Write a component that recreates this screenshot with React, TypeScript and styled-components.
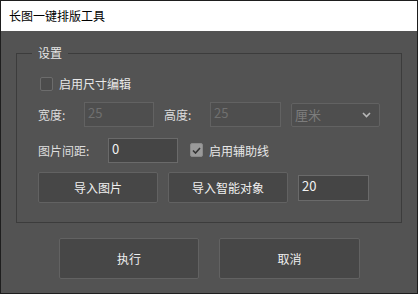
import styled, { createGlobalStyle } from "styled-components";

const GlobalStyle = createGlobalStyle`
  html, body {
    margin: 0;
    padding: 0;
    background: #535353;
  }
  * {
    box-sizing: border-box;
  }
  body {
    font-family: "Noto Sans CJK SC", "Noto Sans", sans-serif;
    font-size: 12px;
  }
`;

export default function App() {
  return (
    <>
      <GlobalStyle />
      <Window>
        <TitleBar>长图一键排版工具</TitleBar>
        <Body>
          <GroupBox>
            <Legend>设置</Legend>
            <CheckRow>
              <CheckBox />
              <CheckLabel>启用尺寸编辑</CheckLabel>
            </CheckRow>
            <Row $height={25} $top={12}>
              <Label $width={46}>宽度:</Label>
              <Field $width={70} $disabled>25</Field>
              <Label $width={46} $gap={10}>高度:</Label>
              <Field $width={71} $disabled>25</Field>
              <Select>
                <span>厘米</span>
                <svg width="9" height="6" viewBox="0 0 9 6">
                  <path d="M1 1 L4.5 4.5 L8 1" stroke="#b8b8b8" strokeWidth="1.6" fill="none" />
                </svg>
              </Select>
            </Row>
            <Row $height={26} $top={10}>
              <Label $width={70}>图片间距:</Label>
              <Field $width={70}>0</Field>
              <CheckBox $checked $gap={12}>
                <svg width="9" height="7" viewBox="0 0 9 7">
                  <path d="M1 3.5 L3.5 6 L8 1" stroke="#333" strokeWidth="1.6" fill="none" />
                </svg>
              </CheckBox>
              <CheckLabel>启用辅助线</CheckLabel>
            </Row>
            <Row $height={31} $top={9}>
              <Button $width={120} $height={31}>导入图片</Button>
              <Button $width={120} $height={31} $gap={10}>导入智能对象</Button>
              <Field $width={71} $height={26} $gap={10}>20</Field>
            </Row>
          </GroupBox>
          <Actions>
            <Button $width={140} $height={41}>执行</Button>
            <Button $width={141} $height={41}>取消</Button>
          </Actions>
        </Body>
      </Window>
    </>
  );
}

const Window = styled.div`
  width: 418px;
  height: 294px;
  border: 1px solid #1e1e1e;
  background: #535353;
  display: flex;
  flex-direction: column;
`;

const TitleBar = styled.div`
  height: 30px;
  background: #ffffff;
  color: #000000;
  display: flex;
  align-items: center;
  padding-left: 8px;
  padding-bottom: 2px;
  font-size: 12px;
`;

const Body = styled.div`
  flex: 1;
  display: flex;
  flex-direction: column;
  padding: 22px 15px 0;
`;

const GroupBox = styled.div`
  position: relative;
  height: 170px;
  border: 1px solid #3c3c3c;
  display: flex;
  flex-direction: column;
  padding: 23px 0 0 21px;
`;

const Legend = styled.span`
  position: absolute;
  top: -9px;
  left: 15px;
  padding: 0 6px;
  background: #535353;
  color: #e6e6e6;
  line-height: 16px;
`;

const CheckRow = styled.div`
  display: flex;
  align-items: center;
  height: 13px;
  padding-left: 2px;
`;

const CheckBox = styled.div<{ $checked?: boolean; $gap?: number }>`
  width: 13px;
  height: 14px;
  margin-left: ${(p) => p.$gap ?? 0}px;
  border: 1px solid ${(p) => (p.$checked ? "#8a8a8a" : "#6c6c6c")};
  border-radius: 2px;
  background: ${(p) => (p.$checked ? "#9a9a9a" : "#4c4c4c")};
  display: flex;
  align-items: center;
  justify-content: center;
  flex-shrink: 0;
`;

const CheckLabel = styled.span`
  margin-left: 6px;
  color: #e8e8e8;
`;

const Row = styled.div<{ $height: number; $top: number }>`
  display: flex;
  align-items: center;
  height: ${(p) => p.$height}px;
  margin-top: ${(p) => p.$top}px;
`;

const Label = styled.span<{ $width: number; $gap?: number }>`
  width: ${(p) => p.$width}px;
  margin-left: ${(p) => p.$gap ?? 0}px;
  color: #dedede;
  flex-shrink: 0;
`;

const Field = styled.div<{ $width: number; $height?: number; $gap?: number; $disabled?: boolean }>`
  width: ${(p) => p.$width}px;
  height: ${(p) => p.$height ?? 25}px;
  margin-left: ${(p) => p.$gap ?? 0}px;
  flex-shrink: 0;
  background: ${(p) => (p.$disabled ? "#4e4e4e" : "#454545")};
  border: 1px solid ${(p) => (p.$disabled ? "#626262" : "#6a6a6a")};
  color: ${(p) => (p.$disabled ? "#707070" : "#f2f2f2")};
  padding: 2px 0 0 3px;
  font-size: 13px;
  line-height: 16px;
`;

const Select = styled.div`
  width: 89px;
  height: 24px;
  margin-left: 10px;
  flex-shrink: 0;
  background: #4e4e4e;
  border: 1px solid #626262;
  border-radius: 2px;
  color: #7c7c7c;
  display: flex;
  align-items: center;
  justify-content: space-between;
  padding: 0 8px 0 3px;
  font-size: 13px;
`;

const Button = styled.div<{ $width: number; $height: number; $gap?: number }>`
  width: ${(p) => p.$width}px;
  height: ${(p) => p.$height}px;
  margin-left: ${(p) => p.$gap ?? 0}px;
  flex-shrink: 0;
  background: #474747;
  border: 1px solid #626262;
  border-radius: 2px;
  color: #f0f0f0;
  display: flex;
  align-items: center;
  justify-content: center;
  font-size: 12px;
`;

const Actions = styled.div`
  display: flex;
  justify-content: center;
  gap: 20px;
  margin-top: 15px;
  padding-left: 1px;
`;
